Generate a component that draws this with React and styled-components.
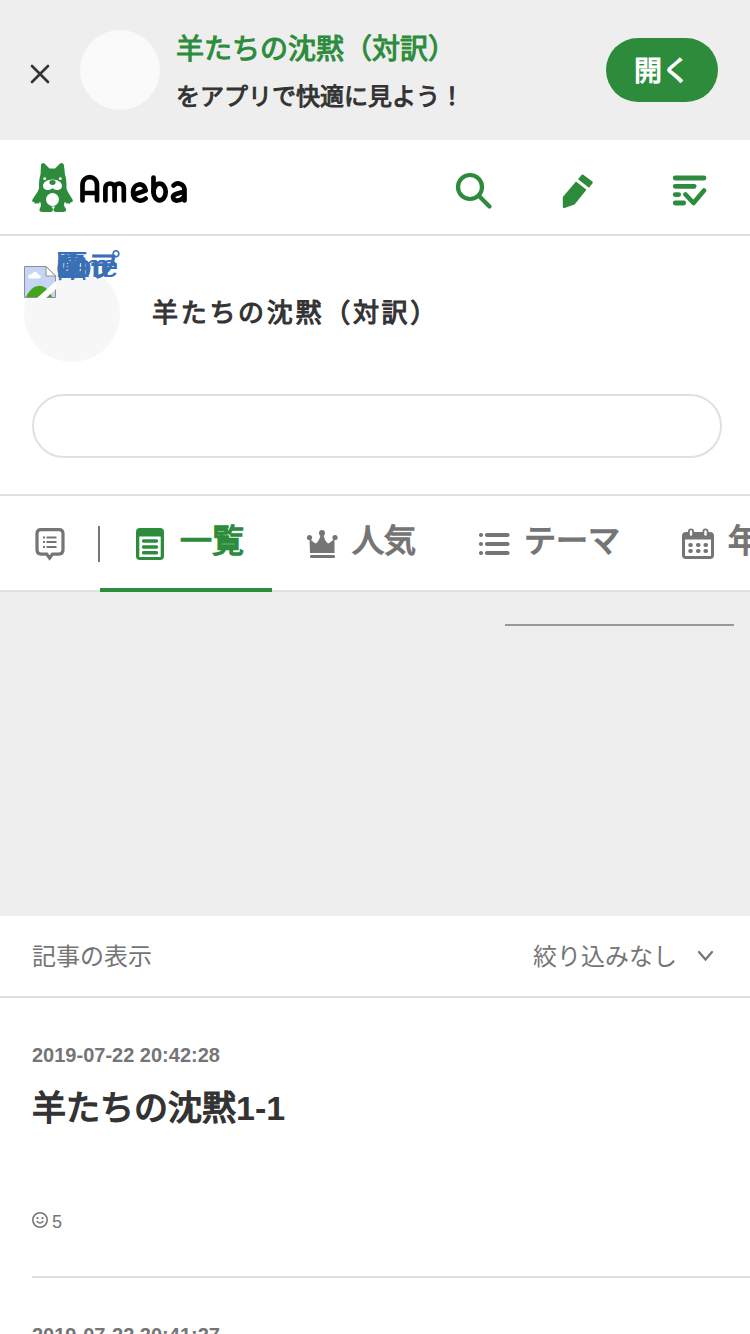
import React from 'react'
import styled, { createGlobalStyle } from 'styled-components';

const GlobalStyle = createGlobalStyle`
    * {
        box-sizing: border-box;
    }
    body {
        margin: 0;
        background: #fff;
        color: #333;
        font-family: "Liberation Sans", "Noto Sans CJK JP", sans-serif;
        overflow: hidden;
    }
    h1, h2, p {
        margin: 0;
    }
    svg {
        display: block;
        flex: none;
    }
    #root {
        height: 1334px;
        overflow: hidden;
    }
`;

const AppBanner = styled.div`
    display: flex;
    align-items: center;
    height: 140px;
    padding: 0 32px 0 30px;
    background: #eee;
`;

const CloseButton = styled.button`
    width: 20px;
    height: 20px;
    margin-top: 8px;
    padding: 0;
    border: 0;
    background: none;
`;

const BannerImage = styled.div`
    width: 80px;
    height: 80px;
    margin: 0 16px 0 30px;
    border-radius: 50%;
    background: #fafafa;
`;

const BannerText = styled.div`
    flex: 1;
    padding-top: 6px;
    white-space: nowrap;
    .name {
        font-size: 28px;
        line-height: 48px;
        color: #2d8c3c;
        -webkit-text-stroke: 1.1px;
    }
    .lead {
        font-size: 24px;
        line-height: 46px;
        -webkit-text-stroke: 1px;
    }
`;

const OpenButton = styled.button`
    width: 112px;
    height: 64px;
    padding: 0 0 2px;
    border: 0;
    border-radius: 32px;
    background: #2d8c3c;
    color: #fff;
    font-family: inherit;
    font-size: 28px;
    -webkit-text-stroke: 1.1px;
`;

const Header = styled.header`
    display: flex;
    align-items: center;
    justify-content: space-between;
    height: 96px;
    padding: 0 43px 0 32px;
    border-bottom: 2px solid #e0e0e0;
`;

const HeaderMenu = styled.nav`
    display: flex;
    align-items: center;
    gap: 69px;
    padding-top: 7px;
    svg:last-child {
        margin-left: 8px;
    }
`;

const Profile = styled.div`
    display: flex;
    height: 158px;
    padding: 30px 24px 0;
    h1 {
        margin-left: 32px;
        font-size: 26px;
        font-weight: normal;
        line-height: 95px;
        letter-spacing: 2.7px;
        -webkit-text-stroke: 1.1px;
    }
`;

const Avatar = styled.div`
    display: flex;
    width: 96px;
    height: 96px;
    border-radius: 50%;
    background: #f7f7f7;
`;

const AvatarAlt = styled.div`
    width: 64px;
    font-size: 32px;
    line-height: 0;
    color: #3970b5;
    word-break: break-all;
`;

const FollowButton = styled.button`
    display: block;
    width: 690px;
    height: 64px;
    margin: 0 0 36px 32px;
    border: 2px solid #e0e0e0;
    border-radius: 32px;
    background: #fff;
`;

const Tabs = styled.nav`
    display: flex;
    height: 98px;
    border-top: 2px solid #e0e0e0;
    box-shadow: inset 0 -2px #e0e0e0;
    overflow: hidden;
`;

const ReadLink = styled.div`
    flex: none;
    display: flex;
    align-items: center;
    width: 100px;
    height: 36px;
    margin-top: 30px;
    padding-left: 34px;
    border-right: 2px solid #757575;
`;

const Tab = styled.div`
    flex: none;
    display: flex;
    align-items: center;
    gap: 12px;
    height: 96px;
    padding: 4px 28px 0 34px;
    border-bottom: 4px solid ${({ $active }) => ($active ? '#2d8c3c' : 'transparent')};
    color: ${({ $active }) => ($active ? '#2d8c3c' : '#757575')};
    font-size: 32px;
    white-space: nowrap;
    -webkit-text-stroke: 1.5px;
    span {
        padding-bottom: 12px;
    }
`;

const AdArea = styled.div`
    display: flex;
    justify-content: flex-end;
    height: 324px;
    padding: 32px 16px 0 0;
    background: #eee;
    &::before {
        content: "";
        width: 229px;
        height: 2px;
        background: #999;
    }
`;

const Filter = styled.div`
    display: flex;
    align-items: center;
    justify-content: space-between;
    height: 82px;
    padding: 0 36px 0 32px;
    border-bottom: 2px solid #e0e0e0;
    color: #757575;
    font-size: 24px;
    span {
        padding-bottom: 4px;
    }
    .select {
        display: flex;
        align-items: center;
        gap: 20px;
    }
`;

const Entry = styled.article`
    height: 280px;
    margin-left: 32px;
    padding-top: 43px;
    border-bottom: 2px solid #e0e0e0;
    time {
        display: block;
        font-size: 20px;
        line-height: 28px;
        font-weight: bold;
        color: #757575;
    }
    h2 {
        height: 50px;
        margin-top: 14px;
        font-size: 34px;
        font-weight: normal;
        line-height: 50px;
        -webkit-text-stroke: 1.5px;
    }
    b {
        -webkit-text-stroke: 0;
    }
`;

const Reaction = styled.div`
    display: flex;
    align-items: center;
    gap: 4px;
    margin-top: 73px;
    color: #757575;
    font-size: 18px;
    line-height: 24px;
    span {
        padding-top: 4px;
    }
`;

function CloseIcon() {
    return (
        <svg width="20" height="20" viewBox="0 0 20 20" fill="none" stroke="#333" strokeWidth="2.6" strokeLinecap="round">
            <path d="M2 2l16 16M18 2L2 18" />
        </svg>
    )
}

function AmebaLogo() {
    return (
        <svg width="156" height="52" viewBox="0 0 156 52">
            <path fill="#2d8c3c" d="M9 4.500C9 2 11.500 1 13 3l4.500 4.500h5.500L27.500 3c1.500-2 4.500-1 4.500 1.500l1 9c1.500 4 1.500 9 1.500 14 1 4 4 7 6 11 1 2-.5 3-2 2.500.5 1.500-1.500 2.500-2.500 1-1 1.500-2.500 0-3-1.500-1.500 3-1 5 .5 6.500 1.500 3 0 4-2.500 4h-7c-3.500 0-3-4-.5-5.500h-4.500c2.500 1.500 3 5.500-.5 5.500h-8c-2.500 0-4-1-2.500-4C9 45.500 9.500 43.500 8 40.500 7.500 42 6 43.500 5 42c-1 1.500-3 .5-2.500-1-1.500.5-3-.5-2-2.500 2-4 5.500-7 6.500-11 0-5 0-10 1.500-14z" />
            <circle cx="12.700" cy="17.700" r="1.400" fill="#fff" />
            <circle cx="28.300" cy="17.700" r="1.400" fill="#fff" />
            <path fill="#fff" d="M20.500 18.500c5.500 0 9.500 3 9.500 6.300 0 5-6.500 5.500-9.500 2.200-3 3.300-9.500 2.800-9.500-2.200 0-3.300 4-6.300 9.500-6.300z" />
            <ellipse cx="20.500" cy="21.500" rx="3.100" ry="2.400" fill="#2d8c3c" />
            <circle cx="20.500" cy="38.500" r="6.500" fill="#fff" />
            <g fill="none" stroke="#000" strokeWidth="4.700" strokeLinecap="round" strokeLinejoin="round">
                <path d="M50.500 39.500V24c0-10.500 14.500-10.500 14.500 0v15.500M50.500 32H65" />
                <path d="M73.400 39.500V27c0-6 9.200-6 9.200 0v12.500M82.600 27c0-6 9.200-6 9.200 0v12.500" />
                <path d="M102 33.500l11.700-4c-1-9-12.700-7.500-12.700 1.500 0 9.500 8.500 10 12.700 6.500" />
                <path d="M121.500 16.500V31" />
                <ellipse cx="127.600" cy="31" rx="6.100" ry="8.300" />
                <path d="M141.500 24.500c3.500-4 11-2 11 5v10M152.500 30.500l-8.500 2.500c-5 2-3 7 1.500 6.500 4-.3 7-3 7-6" />
            </g>
        </svg>
    )
}

function SearchIcon() {
    return (
        <svg width="38" height="38" viewBox="0 0 38 38" fill="none" stroke="#2d8c3c" strokeWidth="4.200" strokeLinecap="round">
            <circle cx="15" cy="15" r="12" />
            <path d="M24 24l10.500 10.500" />
        </svg>
    )
}

function PencilIcon() {
    return (
        <svg width="32" height="36" viewBox="0 0 32 36" fill="#2d8c3c">
            <path d="M19.500 2q.8-1 1.800-.2l9 6.700q1 .8.200 1.800L27 14.800 16 6.200zM14 8.500l10.500 8.300L12.500 31.500 2.500 35q-1.700.3-1.700-1.500V24z" />
        </svg>
    )
}

function CheckListIcon() {
    return (
        <svg width="36" height="32" viewBox="0 0 36 32" fill="none" stroke="#2d8c3c" strokeWidth="4.800" strokeLinecap="round" strokeLinejoin="round">
            <path d="M4.200 3H33M4.200 11.300h19M4.200 19.600h3.500M4.200 28h8.500" />
            <path d="M14.500 19.500l8 8.500L33 15.500" strokeWidth="4.600" />
        </svg>
    )
}

function BrokenImage() {
    return (
        <svg width="32" height="32" viewBox="0 0 32 32">
            <path d="M.5.5H22L31.500 10v21.500H.5z" fill="#c7d5f5" stroke="#8f8f8f" />
            <path d="M5 12.500c-2-3 1-5 3-4 1-4 6-3 6 0 4 0 3 4 1 4z" fill="#fff" />
            <path d="M2 31c7-15 20-15 26 0z" fill="#43a51f" />
            <path d="M13 32L32 15v8L22 32z" fill="#fff" />
            <path d="M22 .5V10h9.500z" fill="#fff" stroke="#8f8f8f" />
        </svg>
    )
}

function ReadIcon() {
    return (
        <svg width="32" height="34" viewBox="0 0 32 34">
            <path d="M7 2.600h18q4 0 4 4v16.500q0 4-4 4h-6.500L15.600 31l-2.900-3.900H7q-4 0-4-4V6.600q0-4 4-4z" fill="none" stroke="#757575" strokeWidth="3.200" />
            <path d="M9 10.500h2M12.500 10.500h10M9 15h2M12.500 15h10M9 20h2M12.500 20h10" stroke="#757575" strokeWidth="2.200" />
        </svg>
    )
}

function ArticleIcon() {
    return (
        <svg width="34" height="34" viewBox="0 0 34 34">
            <rect x="2" y="1" width="28" height="32" rx="4" fill="#2d8c3c" />
            <path fill="#fff" d="M5.300 9.500h21.400v20.500h-21.400z" />
            <path d="M9.500 14h13M9.500 20h13M9.500 25.700h13" stroke="#2d8c3c" strokeWidth="3.400" strokeLinecap="round" />
        </svg>
    )
}

function CrownIcon() {
    return (
        <svg width="34" height="34" viewBox="0 0 34 34" fill="#757575">
            <circle cx="3.500" cy="10.500" r="2.600" />
            <circle cx="16" cy="6" r="3" />
            <circle cx="29" cy="10.500" r="2.600" />
            <path d="M3.500 11.500q4.500 4.500 6.500 5 3.500-3 4.700-9h2.600q1.200 6 4.700 9 2-.5 6.500-5V26H4z" />
            <rect x="4" y="28" width="25" height="3" rx="1.200" />
        </svg>
    )
}

function ListIcon() {
    return (
        <svg width="34" height="34" viewBox="0 0 34 34" fill="none" stroke="#757575" strokeWidth="4.200" strokeLinecap="round">
            <path d="M3 8h.01M9 8h20.500M3 17h.01M9 17h20.500M3 26h.01M9 26h20.500" />
        </svg>
    )
}

function CalendarIcon() {
    return (
        <svg width="34" height="34" viewBox="0 0 34 34">
            <rect x="0" y="5" width="32" height="27" rx="4" fill="#757575" />
            <path d="M3 12.500h26V29H3z" fill="#fff" />
            <path d="M9 4.500v3M23.500 4.500v3" stroke="#757575" strokeWidth="6" strokeLinecap="round" />
            <path d="M9 4.500v3M23.500 4.500v3" stroke="#fff" strokeWidth="2.400" strokeLinecap="round" />
            <path d="M8.300 18h.5M16 18h.5M23.500 18h.5M8.300 24h.5M16 24h.5M23.500 24h.5" stroke="#757575" strokeWidth="4.200" strokeLinecap="round" />
        </svg>
    )
}

function ChevronIcon() {
    return (
        <svg width="17" height="12" viewBox="0 0 17 12" fill="none" stroke="#757575" strokeWidth="2.200" strokeLinecap="round">
            <path d="M2 2l6.500 7.500L15 2" />
        </svg>
    )
}

function SmileIcon() {
    return (
        <svg width="16" height="16" viewBox="0 0 16 16" fill="none" stroke="#757575" strokeWidth="1.600" strokeLinecap="round">
            <circle cx="8" cy="8" r="7.200" />
            <path d="M5.500 6.200h.01M10.500 6.200h.01" strokeWidth="2.200" />
            <path d="M5 9.500q3 3 6 0" />
        </svg>
    )
}

const entries = [
    { date: '2019-07-22 20:42:28', title: '羊たちの沈黙', part: '1-1', likes: 5 },
    { date: '2019-07-22 20:41:27' },
];

function App() {
    return (
        <>
            <GlobalStyle />
            <AppBanner>
                <CloseButton><CloseIcon /></CloseButton>
                <BannerImage />
                <BannerText>
                    <p className="name">羊たちの沈黙（対訳）</p>
                    <p className="lead">をアプリで快適に見よう！</p>
                </BannerText>
                <OpenButton>開く</OpenButton>
            </AppBanner>
            <Header>
                <AmebaLogo />
                <HeaderMenu>
                    <SearchIcon />
                    <PencilIcon />
                    <CheckListIcon />
                </HeaderMenu>
            </Header>
            <Profile>
                <Avatar>
                    <BrokenImage />
                    <AvatarAlt>bonnenomeのプロフィール 画</AvatarAlt>
                </Avatar>
                <h1>羊たちの沈黙（対訳）</h1>
            </Profile>
            <FollowButton />
            <Tabs>
                <ReadLink><ReadIcon /></ReadLink>
                <Tab $active><ArticleIcon /><span>一覧</span></Tab>
                <Tab><CrownIcon /><span>人気</span></Tab>
                <Tab><ListIcon /><span>テーマ</span></Tab>
                <Tab><CalendarIcon /><span>年</span></Tab>
            </Tabs>
            <AdArea />
            <Filter>
                <span>記事の表示</span>
                <div className="select">
                    <span>絞り込みなし</span>
                    <ChevronIcon />
                </div>
            </Filter>
            {entries.map((entry) => (
                <Entry key={entry.date}>
                    <time>{entry.date}</time>
                    {entry.title && <h2>{entry.title}<b>{entry.part}</b></h2>}
                    {entry.likes && <Reaction><SmileIcon /><span>{entry.likes}</span></Reaction>}
                </Entry>
            ))}
        </>
    )
}

export default App;
